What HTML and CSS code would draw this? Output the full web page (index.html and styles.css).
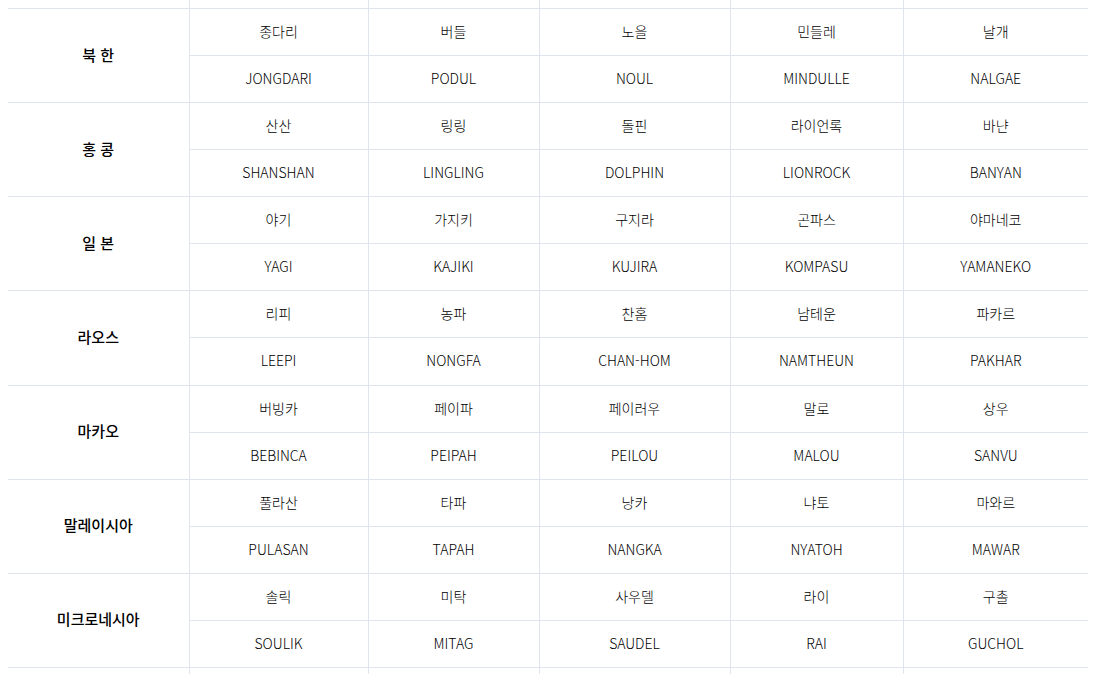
FILE: index.html
```html
<!DOCTYPE html>
<html lang="ko">
<head>
<meta charset="utf-8">
<link rel="stylesheet" href="styles.css">
</head>
<body>
<div class="wrap">
<table class="names">
<colgroup>
<col class="c1"><col class="c2"><col class="c3"><col class="c4"><col class="c5"><col class="c6">
</colgroup>
<tbody>
<tr class="cut"><td></td><td></td><td></td><td></td><td></td><td></td></tr>
<tr><th rowspan="2">북 한</th><td>종다리</td><td>버들</td><td>노을</td><td>민들레</td><td>날개</td></tr>
<tr><td>JONGDARI</td><td>PODUL</td><td>NOUL</td><td>MINDULLE</td><td>NALGAE</td></tr>
<tr><th rowspan="2">홍 콩</th><td>산산</td><td>링링</td><td>돌핀</td><td>라이언록</td><td>바냔</td></tr>
<tr><td>SHANSHAN</td><td>LINGLING</td><td>DOLPHIN</td><td>LIONROCK</td><td>BANYAN</td></tr>
<tr><th rowspan="2">일 본</th><td>야기</td><td>가지키</td><td>구지라</td><td>곤파스</td><td>야마네코</td></tr>
<tr><td>YAGI</td><td>KAJIKI</td><td>KUJIRA</td><td>KOMPASU</td><td>YAMANEKO</td></tr>
<tr><th rowspan="2">라오스</th><td>리피</td><td>농파</td><td>찬홈</td><td>남테운</td><td>파카르</td></tr>
<tr><td>LEEPI</td><td>NONGFA</td><td>CHAN-HOM</td><td>NAMTHEUN</td><td>PAKHAR</td></tr>
<tr><th rowspan="2">마카오</th><td>버빙카</td><td>페이파</td><td>페이러우</td><td>말로</td><td>상우</td></tr>
<tr><td>BEBINCA</td><td>PEIPAH</td><td>PEILOU</td><td>MALOU</td><td>SANVU</td></tr>
<tr><th rowspan="2">말레이시아</th><td>풀라산</td><td>타파</td><td>낭카</td><td>냐토</td><td>마와르</td></tr>
<tr><td>PULASAN</td><td>TAPAH</td><td>NANGKA</td><td>NYATOH</td><td>MAWAR</td></tr>
<tr><th rowspan="2">미크로네시아</th><td>솔릭</td><td>미탁</td><td>사우델</td><td>라이</td><td>구촐</td></tr>
<tr><td>SOULIK</td><td>MITAG</td><td>SAUDEL</td><td>RAI</td><td>GUCHOL</td></tr>
<tr class="tail"><td></td><td></td><td></td><td></td><td></td><td></td></tr>
</tbody>
</table>
</div>
</body>
</html>
```

FILE: styles.css
```css
html, body {
  margin: 0;
  padding: 0;
  background: #ffffff;
}
.wrap {
  padding: 0 7px 0 8px;
  overflow: hidden;
  height: 674px;
}
.names {
  width: 1080px;
  border-collapse: collapse;
  table-layout: fixed;
  font-family: "Noto Sans CJK KR", "Noto Sans", sans-serif;
  color: #000000;
}
.c1 { width: 181px; }
.c2 { width: 179px; }
.c3 { width: 171px; }
.c4 { width: 191px; }
.c5 { width: 173px; }
.c6 { width: 185px; }
.names td, .names th {
  border: 1px solid #dfe4ee;
  text-align: center;
  vertical-align: middle;
  padding: 0 0 2px 0;
  height: 44.07px;
  font-size: 14px;
  font-weight: 300;
  line-height: 20px;
}
.names tr > :first-child { border-left: none; }
.names tr > :last-child { border-right: none; }
.names tr:nth-child(odd) > td:first-child { border-left: 1px solid #dfe4ee; }
.names th {
  font-size: 15px;
  font-weight: 500;
  border-left: none;
}
.names tr.cut td {
  height: 8px;
  padding: 0;
  border-top: none;
}
.names tr.cut td:first-child { border-left: none; }
.names tr.tail td:first-child { border-left: none; }
```
